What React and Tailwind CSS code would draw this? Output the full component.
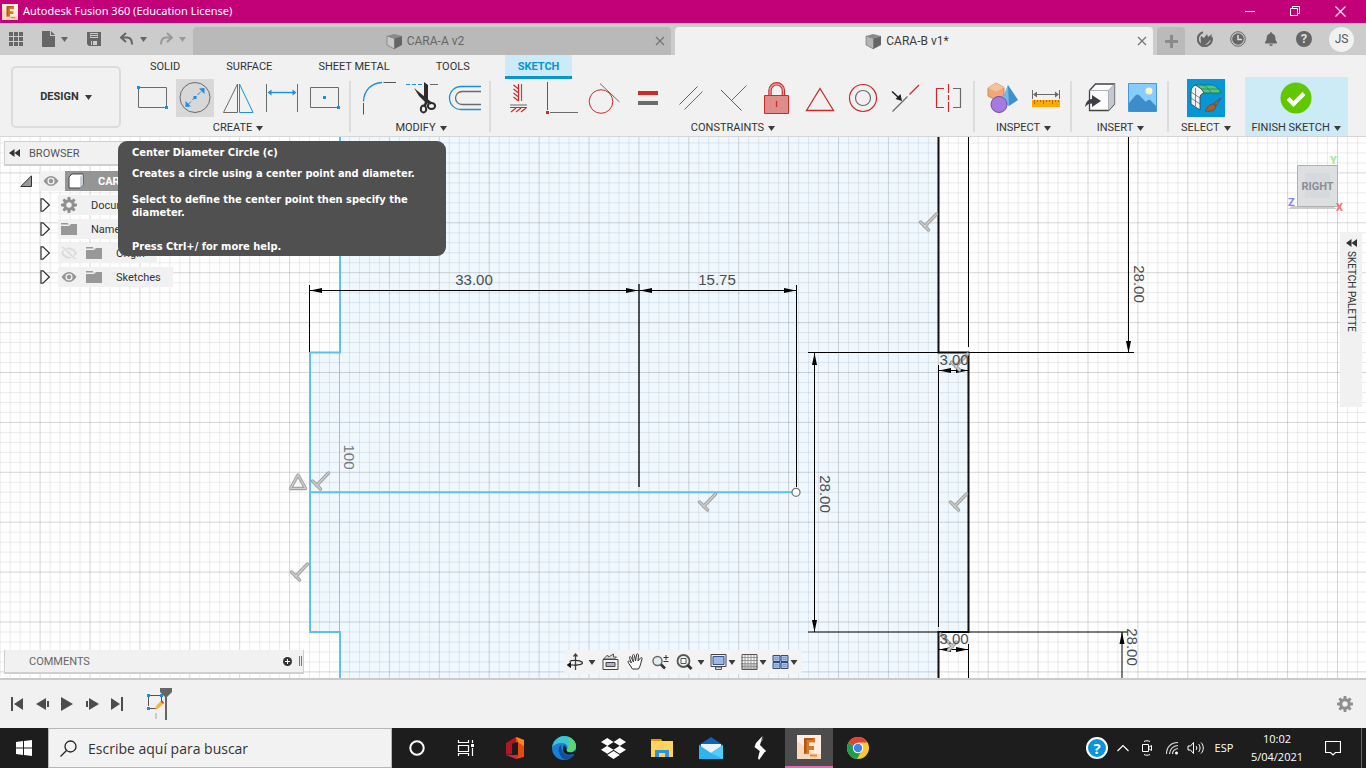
import { FaBell, FaDropbox } from "react-icons/fa";

const BLUE = "#1a8fe3";
const GRAY = "#6b6b6b";
const RED = "#cc2b2b";

// --- small shared pieces ---
const Icon = ({ w = 38, h = w, children }) => (
  <svg width={w} height={h} viewBox={`0 0 ${w} ${h}`} fill="none" className="shrink-0" aria-hidden="true">
    {children}
  </svg>
);

const Caret = ({ color = "#3c3c3c" }) => (
  <Icon w={7} h={5}>
    <path d="M0 0h7L3.5 5z" fill={color} />
  </Icon>
);

const Gear = ({ size = 16, color = "#8f8f8f" }) => (
  <svg width={size} height={size} viewBox="-8 -8 16 16" className="shrink-0" aria-hidden="true">
    <circle r="4.2" fill="none" stroke={color} strokeWidth="3" />
    {[0, 45, 90, 135, 180, 225, 270, 315].map((a) => (
      <path key={a} d="M-1.7 -5L-1.3 -8H1.3L1.7 -5z" fill={color} transform={`rotate(${a})`} />
    ))}
  </svg>
);

const Eye = () => (
  <Icon w={16}>
    <path d="M.5 8C3 4.400 5.500 3 8 3s5 1.400 7.500 5c-2.500 3.600-5 5-7.500 5S3 11.600.5 8z" fill="#959595" />
    <circle cx="8" cy="8" r="3.6" fill="#f1f1f1" />
    <circle cx="8" cy="8" r="2.2" fill="#959595" />
  </Icon>
);

const EyeOff = () => (
  <Icon w={16}>
    <path d="M1 8c2.300-3.300 4.600-4.600 7-4.600s4.700 1.300 7 4.600c-2.300 3.300-4.600 4.600-7 4.600S3.300 11.300 1 8z" stroke="#dadada" strokeWidth="1.8" />
    <circle cx="8" cy="8" r="2.2" fill="#dadada" />
    <path d="M1.500 2.500l13 11.500" stroke="#f1f1f1" strokeWidth="3.5" />
    <path d="M1.500 2l13 12" stroke="#dadada" strokeWidth="1.6" />
  </Icon>
);

const Folder = () => (
  <Icon w={16} h={14}>
    <path d="M0 1h6.500l1.500 1.500H0zM0 4h8l2-2h6v11H0z" fill="#989898" />
  </Icon>
);

const Cube = ({ front = "#c4c4c4" }) => (
  <Icon w={17}>
    <path d="M1 3l7-2 8 2-7.500 2.500z" fill="#8a8a8a" />
    <path d="M1 3l7.500 2.500V16L1 12z" fill={front} stroke="#777" strokeWidth=".7" />
    <path d="M16 3L8.500 5.500V16l7.500-4z" fill="#656565" />
  </Icon>
);

const Collapse = () => (
  <Icon w={11} h={8}>
    <path d="M5.500 0v8L0 4zM11 0v8L5.500 4z" fill="#333" />
  </Icon>
);

const FusionLogo = ({ size }) => (
  <svg width={size} height={size} viewBox="0 0 24 24" className="shrink-0" aria-hidden="true">
    <path d="M0 0h24v24H0z" fill="#fdeee0" />
    <path d="M0 7c8 2 10 12 24 12v5H0z" fill="#fad9ba" />
    <path d="M7 3h11v4.500h-6V11h5v4h-5v4H7z" fill="#d9772a" />
    <path d="M7 3h11l-3 2H9.500v12L7 19z" fill="#b05a17" />
    <path d="M13 20.500h7" stroke="#e58a3c" strokeWidth="2" />
  </svg>
);

// --- ribbon tools, grouped as in the toolbar ---
const createTools = [
  {
    name: "2-Point Rectangle",
    art: (
      <>
        <path d="M5.500 8.500h28v20h-28z" stroke={GRAY} />
        <path d="M4 7h3v3H4zM32 27h3v3h-3z" fill={BLUE} />
      </>
    ),
  },
  {
    name: "Center Diameter Circle",
    active: true,
    art: (
      <>
        <circle cx="19" cy="18.500" r="15" stroke={GRAY} />
        <path d="M11.500 26L26.500 11" stroke={BLUE} strokeDasharray="5 2" />
        <path d="M9.500 28v-6l5.500 5.500zM28.500 9v6L23 9.500zM17.500 17h3v3h-3z" fill={BLUE} />
      </>
    ),
  },
  {
    name: "Mirror",
    art: (
      <>
        <path d="M4.500 33.500L18.500 5v28.500z" stroke={GRAY} />
        <path d="M20.500 5v28.500H34z" stroke={BLUE} />
      </>
    ),
  },
  {
    name: "Sketch Dimension",
    art: (
      <>
        <path d="M4.500 5v28M35.500 5v28" stroke={GRAY} />
        <path d="M8 13.500h24" stroke={BLUE} strokeWidth="1.4" />
        <path d="M5.500 13.500l4-3v6zM34.500 13.500l-4-3v6z" fill={BLUE} />
      </>
    ),
  },
  {
    name: "Center Rectangle",
    art: (
      <>
        <path d="M5.500 8.500h28v20h-28z" stroke={GRAY} />
        <path d="M18 17h3v3h-3zM32 27h3v3h-3z" fill={BLUE} />
      </>
    ),
  },
];

const modifyTools = [
  {
    name: "Fillet",
    art: (
      <>
        <path d="M4.500 22.500C5 11.500 12 4 23 3.500" stroke={BLUE} strokeWidth="1.3" />
        <path d="M24.500 3.500H37M4.500 24v11.500" stroke="#555" />
      </>
    ),
  },
  {
    name: "Trim",
    art: (
      <>
        <path d="M4 5.500h17" stroke={BLUE} strokeDasharray="4 2" />
        <path d="M28 5.500h8" stroke={GRAY} />
        <path d="M22 3l4 3v17l-4-4zM12 9l16 13-3 3-8-8z" fill="#2d2d2d" />
        <path d="M22.500 28l2-6 4.500 2" stroke="#2d2d2d" strokeWidth="2.5" />
        <ellipse cx="21.500" cy="30" rx="2.700" ry="3.500" stroke="#2d2d2d" strokeWidth="2" />
        <ellipse cx="29.500" cy="27" rx="3.600" ry="3" stroke="#2d2d2d" strokeWidth="2" />
      </>
    ),
  },
  {
    name: "Offset",
    art: (
      <>
        <path d="M36 7.500H16a11.500 11.500 0 000 23h20" stroke={BLUE} strokeWidth="1.3" />
        <path d="M36 12.500H17a6.500 6.500 0 000 13h19" stroke={GRAY} strokeWidth="1.3" />
      </>
    ),
  },
];

const constraintTools = [
  {
    name: "Horizontal/Vertical",
    art: (
      <>
        <path d="M19.500 5v17M11 28.500h17M14.500 6l5 4M14.500 10l5 4M14.500 14l5 4M14.500 18l5 4M12 33l5-4M17 33l5-4M22 33l5-4" stroke={RED} strokeWidth="1.2" />
        <path d="M22.500 5v17M11 26h17" stroke={GRAY} strokeWidth="1.2" />
      </>
    ),
  },
  {
    name: "Coincident",
    art: (
      <>
        <path d="M5.500 3v28" stroke={RED} />
        <path d="M4 32h3v3H4z" fill={RED} />
        <path d="M8 33.500h28" stroke={GRAY} />
      </>
    ),
  },
  {
    name: "Tangent",
    art: (
      <>
        <circle cx="16" cy="22.500" r="11.800" stroke={RED} />
        <path d="M15 4.500L34.500 23" stroke={GRAY} />
      </>
    ),
  },
  {
    name: "Equal",
    art: (
      <>
        <path d="M10 12h20v4H10z" fill={RED} />
        <path d="M10 22h20v4H10z" fill={GRAY} />
      </>
    ),
  },
  {
    name: "Parallel",
    art: (
      <>
        <path d="M8.500 25.500l18-18" stroke={RED} />
        <path d="M13.500 30.500l18-18" stroke={GRAY} />
      </>
    ),
  },
  {
    name: "Perpendicular",
    art: (
      <>
        <path d="M7 11l20.500 20.500" stroke={RED} />
        <path d="M18 21L32.500 6.500" stroke={GRAY} />
      </>
    ),
  },
  {
    name: "Fix/Unfix",
    art: (
      <>
        <path d="M13 17v-5.500a6.700 6.700 0 0113.400 0V17" stroke={RED} strokeWidth="3.4" />
        <path d="M13 17v-5.500a6.700 6.700 0 0113.400 0V17" stroke="#e9a9a9" strokeWidth="1.2" />
        <path d="M7.500 16.500h24v18h-24z" fill="#e08c8c" stroke={RED} />
        <path d="M19.500 22v6" stroke={RED} strokeWidth="1.3" />
      </>
    ),
  },
  {
    name: "Midpoint",
    art: <path d="M20 9.500l13.500 22H6.500z" stroke={RED} strokeWidth="1.3" />,
  },
  {
    name: "Concentric",
    art: (
      <>
        <circle cx="20" cy="19" r="13.500" stroke={RED} strokeWidth="1.2" />
        <circle cx="20" cy="19" r="7.500" stroke={GRAY} strokeWidth="1.2" />
      </>
    ),
  },
  {
    name: "Collinear",
    art: (
      <>
        <path d="M6.500 32.500l15-15" stroke={GRAY} strokeWidth="1.2" />
        <path d="M23.500 15.500L33 6" stroke={RED} strokeWidth="1.2" />
        <path d="M6 12.500l6 5.500" stroke="#222" strokeWidth="1.6" />
        <path d="M16 22l-6.500-2 5-5z" fill="#222" />
      </>
    ),
  },
  {
    name: "Symmetry",
    art: (
      <>
        <path d="M15 9.500H7.500v19H15M19.500 5v9M19.500 16v5M19.500 23v10" stroke={RED} strokeWidth="1.2" />
        <path d="M24 9.500h7.500v19H24" stroke={GRAY} strokeWidth="1.2" />
      </>
    ),
  },
];

const inspectTools = [
  {
    name: "Section Analysis",
    art: (
      <>
        <path d="M13 4l8 4.500v8L13 21l-8-4v-8z" fill="#f0a878" stroke="#c47a45" strokeWidth=".8" />
        <path d="M13 4l8 4.500-8 4-8-3.500z" fill="#f7c39c" />
        <path d="M25 6l10 15-9 6-7-5z" fill="#3f8fcd" />
        <path d="M25 6l1 21-7-5z" fill="#74b8e6" />
        <circle cx="16" cy="25.500" r="8" fill="#a57be0" stroke="#7448b4" />
      </>
    ),
  },
  {
    name: "Measure",
    art: (
      <>
        <path d="M6.500 11v9M33.500 11v9M10 15.500h20" stroke={GRAY} />
        <path d="M7 15.500l4-3v6zM33 15.500l-4-3v6z" fill={GRAY} />
        <path d="M6 21h28v7H6z" fill="#ffa800" />
        <path d="M8.500 21v4M11.500 21v2M14.500 21v2M17.500 21v4M20.500 21v2M23.500 21v2M26.500 21v4M29.500 21v2M32.500 21v2" stroke="#b06c00" />
      </>
    ),
  },
];

const insertTools = [
  {
    name: "Insert Derive",
    art: (
      <>
        <path d="M9.500 11.500l6-6.500h19v20l-6 6.500h-19z" fill="#fbfbfb" stroke="#444" strokeWidth="1.3" />
        <path d="M28.500 11.500l6-6.500v20l-6 6.500z" fill="#c3c8d1" />
        <path d="M9.500 11.500h19v20M28.500 11.500L34.500 5" stroke="#9b9fa8" strokeWidth=".8" />
        <path d="M5 28c1-6 4-8 7-8v-4l9 6-9 6v-3.500c-3 0-5 1-7 3.500z" fill="#3e3e46" />
      </>
    ),
  },
  {
    name: "Canvas",
    art: (
      <>
        <path d="M5.500 4.500h28v28h-28z" fill="#86cdff" stroke="#4997d3" />
        <path d="M6 24l6-7c2-2 3-2 5 0l6 6c2-3 4-3 6 0l4 4v5.500H6z" fill="#3b8dcc" />
        <circle cx="26" cy="12" r="3.500" fill="#fff7c4" />
      </>
    ),
  },
];

const selectTools = [
  {
    name: "Select",
    art: (
      <>
        <path d="M0 0h38v38H0z" fill="#0696d7" />
        <path d="M8 6h18c4 2 6 4 8 8H17c-2-4-5-6-9-8z" fill="#4fc586" stroke="#1b7046" strokeWidth=".8" />
        <path d="M16 6c4 2 7 5 8 8M13 10h18" stroke="#257d51" strokeWidth=".7" />
        <path d="M8 6c-3 2-4 4-4 7v12l9 6V19c0-3 1-4 4-5-2-4-5-6-9-8z" fill="#f2f4f5" stroke="#444" strokeWidth=".9" />
        <path d="M8.500 9v18M4 13l9 6M4 19l9 6" stroke="#555" strokeWidth=".7" />
        <path d="M34 19l-7 5 2 3z" fill="#8b6a4c" stroke="#58483c" strokeWidth=".7" />
        <path d="M27 25c-5 0-6 3-9 7 5 1 10 0 11-4z" fill="#a2622c" stroke="#6e3f17" strokeWidth=".7" />
      </>
    ),
  },
];

const ToolGroup = ({ label, tools }) => (
  <div className="flex">
    <div className="flex flex-col items-center pr-1.5 pl-2">
      <div className="flex gap-[5px]">
        {tools.map((tool) => (
          <button key={tool.name} type="button" aria-label={tool.name} className={tool.active ? "bg-[#d8d8d8]" : ""}>
            <Icon>{tool.art}</Icon>
          </button>
        ))}
      </div>
      <button type="button" className="mt-[3px] flex h-4 items-center gap-1 whitespace-nowrap">
        {label} <Caret />
      </button>
    </div>
  </div>
);

const Divider = () => <span className="mt-0.5 h-[51px] w-0.5 bg-[#dcdcdc]" />;

const TitleBar = () => (
  <header className="flex h-[23px] shrink-0 items-center bg-[#c20077] pr-[3px] pl-0.5 text-white">
    <FusionLogo size={16} />
    <h1 className="ml-[5px] flex-1 font-['Noto_Sans',sans-serif] text-[11px]">Autodesk Fusion 360 (Education License)</h1>
    <button type="button" aria-label="Minimize" className="flex w-[45px] justify-center">
      <Icon w={11}><path d="M0 5.500h10" stroke="#fff" /></Icon>
    </button>
    <button type="button" aria-label="Restore" className="flex w-[45px] justify-center">
      <Icon w={11}><path d="M.5 2.500h7v7h-7zM2.500 2.500v-2h7v7h-2" stroke="#fff" /></Icon>
    </button>
    <button type="button" aria-label="Close" className="flex w-[45px] justify-center">
      <Icon w={11}><path d="M.5.5l10 10M10.500.5l-10 10" stroke="#fff" strokeWidth="1.1" /></Icon>
    </button>
  </header>
);

const DocTab = ({ name, active = false }) => (
  <div className={`flex min-w-0 flex-1 items-center rounded-t px-1.5 ${active ? "bg-[#f1f1f1] text-[#3c3c3c]" : "bg-[#b9b9b9] text-[#666]"}`}>
    <button type="button" className="flex flex-1 items-center justify-center gap-1 pr-1 text-[12px]">
      <Cube front={active ? "#b4b4b4" : "#c8c8c8"} />
      {name}
    </button>
    <button type="button" aria-label={`Close ${name}`}>
      <Icon w={10}><path d="M1 1l8 8M9 1L1 9" stroke="#777" strokeWidth="1.3" /></Icon>
    </button>
  </div>
);

const TabBar = () => (
  <div className="flex h-8 shrink-0 bg-[#cccccc] pt-1">
    <div className="flex w-[193px] shrink-0 items-center pb-1 pl-[9px]">
      <button type="button" aria-label="Data panel">
        <Icon w={14}>
          <path d="M0 0h4v4H0zM5 0h4v4H5zM10 0h4v4h-4zM0 5h4v4H0zM5 5h4v4H5zM10 5h4v4h-4zM0 10h4v4H0zM5 10h4v4H5zM10 10h4v4h-4z" fill="#666" />
        </Icon>
      </button>
      <button type="button" aria-label="File" className="ml-[19px] flex items-center gap-1.5">
        <Icon w={13} h={16}><path d="M0 0h8v5h5v11H0zM9 0l4 4H9z" fill="#666" /></Icon>
        <Caret color="#666" />
      </button>
      <button type="button" aria-label="Save" className="ml-[19px]">
        <Icon w={14}>
          <path d="M0 0h14v14H2l-2-2z" fill="#666" />
          <path d="M3 1h8v5H3zM4 9h6v4H4z" fill="#ccc" />
          <path d="M3.500 2.500h7M3.500 4.500h7M5.500 9v4" stroke="#666" />
        </Icon>
      </button>
      <button type="button" aria-label="Undo" className="ml-[19px] flex items-center gap-1.5">
        <Icon w={14}><path d="M6 1L1 5.500 6 10M1.500 5.500H7c4 0 5 3 5 7" stroke="#666" strokeWidth="2" /></Icon>
        <Caret color="#666" />
      </button>
      <button type="button" aria-label="Redo" className="ml-3 flex items-center gap-1.5">
        <Icon w={14}><path d="M8 1l5 4.500L8 10M12.500 5.500H7c-4 0-5 3-5 7" stroke="#999" strokeWidth="2" /></Icon>
        <Caret color="#999" />
      </button>
    </div>
    <div className="flex min-w-0 flex-1 gap-1">
      <DocTab name="CARA-A v2" />
      <DocTab name="CARA-B v1*" active />
    </div>
    <button type="button" aria-label="New tab" className="ml-1 flex w-7 items-center justify-center rounded-t bg-[#bababa]">
      <Icon w={13}><path d="M6.500 0v13M0 6.500h13" stroke="#8a8a8a" strokeWidth="3" /></Icon>
    </button>
    <div className="flex w-[181px] shrink-0 items-center gap-[17px] pb-1 pl-3">
      <button type="button" aria-label="Extensions">
        <Icon w={16}>
          <path d="M6 1.300A7 7 0 1014.500 6" stroke="#666" strokeWidth="2.2" />
          <path d="M3.500 13c1-4-.5-5 .5-8l3 2 3-4 1 3 4-3-1 4 1.500 1-3.500 2c-1 3-3 2-4 4.500z" fill="#666" />
        </Icon>
      </button>
      <button type="button" aria-label="Job status">
        <Icon w={16}>
          <circle cx="8" cy="8" r="7.300" stroke="#666" />
          <circle cx="8" cy="8" r="5.800" fill="#666" />
          <path d="M8 4v4.500h4" stroke="#ddd" strokeWidth="1.5" />
        </Icon>
      </button>
      <button type="button" aria-label="Notifications" className="px-px">
        <FaBell size={14} color="#666" />
      </button>
      <button type="button" aria-label="Help" className="flex size-4 items-center justify-center rounded-full bg-[#666] text-[13px] font-bold text-[#ddd]">
        ?
      </button>
      <button type="button" aria-label="Profile" className="size-[25px] rounded-full bg-[#f1f1f1] text-[12px] text-[#555]">
        JS
      </button>
    </div>
  </div>
);

const Ribbon = () => (
  <div className="flex h-[82px] shrink-0 border-b border-[#d6d6d6] bg-[#f1f1f1] text-[11px] text-[#333]">
    <button type="button" className="mt-[11px] ml-[11px] flex h-[62px] w-[110px] shrink-0 items-center justify-center gap-1.5 rounded-[5px] border-2 border-[#dcdcdc] font-bold">
      DESIGN <Caret />
    </button>
    <div className="ml-1 flex flex-1 flex-col">
      <nav className="flex h-6 items-stretch pl-0.5">
        <button type="button" className="px-[23px]">SOLID</button>
        <button type="button" className="px-[23px]">SURFACE</button>
        <button type="button" className="px-[23px]">SHEET METAL</button>
        <button type="button" className="px-[23px]">TOOLS</button>
        <button type="button" className="ml-3 border-b-[3px] border-[#0696d7] bg-[#cdeaf7] px-[13px] pt-[3px] font-bold text-[#0696d7]">
          SKETCH
        </button>
      </nav>
      <div className="flex h-[57px] items-start">
        <ToolGroup label="CREATE" tools={createTools} />
        <Divider />
        <ToolGroup label="MODIFY" tools={modifyTools} />
        <Divider />
        <ToolGroup label="CONSTRAINTS" tools={constraintTools} />
        <Divider />
        <ToolGroup label="INSPECT" tools={inspectTools} />
        <Divider />
        <ToolGroup label="INSERT" tools={insertTools} />
        <Divider />
        <div className="pl-1">
          <ToolGroup label="SELECT" tools={selectTools} />
        </div>
        <button type="button" className="-mt-0.5 ml-2 flex h-[59px] flex-col items-center bg-[#cdeaf7] px-[7px] pt-0.5">
          <Icon>
            <circle cx="19" cy="19" r="15.500" fill="#61c800" />
            <path d="M11 19.500l5.500 5.500L27 14.500" stroke="#fff" strokeWidth="4.2" />
          </Icon>
          <span className="mt-[3px] flex h-4 items-center gap-1 whitespace-nowrap">
            FINISH SKETCH <Caret />
          </span>
        </button>
      </div>
    </div>
  </div>
);

// --- sketch drawing ---
const STEP = 9.98;
const gridLines = (origin, from, to) => {
  const lines = [];
  for (let i = Math.ceil((from - origin) / STEP); origin + i * STEP < to; i++) {
    lines.push({ pos: origin + i * STEP, major: i % 5 === 0 });
  }
  return lines;
};

const Arrow = ({ x, y, angle }) => (
  <path d="M0 0L12 -2.500V2.500z" fill="#000" transform={`translate(${x} ${y}) rotate(${angle})`} />
);

const PerpMark = ({ x, y, flip = false }) => (
  <g transform={`translate(${x} ${y}) scale(${flip ? -1 : 1} 1)`} strokeLinecap="round" fill="none">
    <path d="M8.500 -8L-3.500 4.500M-7.500 0L0.500 8" stroke="#a3a3a3" strokeWidth="3.4" />
    <path d="M8.500 -8L-3.500 4.500M-7.500 0L0.500 8" stroke="#cfcfcf" strokeWidth="1.2" />
  </g>
);

const DimText = ({ x, y, vertical = false, color = "#4a4e52", children }) => (
  <text
    textAnchor="middle"
    fill={color}
    transform={`translate(${x} ${y})${vertical ? " rotate(90)" : ""}`}
    className="font-['Liberation_Sans',sans-serif] text-[15px]"
  >
    {children}
  </text>
);

const Sketch = () => (
  <svg className="absolute inset-0 h-full w-full" viewBox="0 137 1366 541" preserveAspectRatio="xMidYMid slice" fill="none">
    <path d="M339.500 130V352.500H309.500V632H339.500V690H938.500V632H968.500V352.500H938.500V130z" fill="#eff8fe" />
    {gridLines(339.5, 0, 1366).map(({ pos, major }) => (
      <path key={pos} d={`M${pos} 130V690`} stroke="#000" strokeOpacity={major ? 0.16 : 0.08} />
    ))}
    {gridLines(272.7, 130, 690).map(({ pos, major }) => (
      <path key={pos} d={`M0 ${pos}H1366`} stroke="#000" strokeOpacity={major ? 0.16 : 0.08} />
    ))}

    {/* profile edges */}
    <path d="M339.500 353V632" stroke="#7fe07f" />
    <path d="M340 130V352.500H310V632H340V690M310 492.300H792" stroke="#62bfe9" strokeWidth="2" />
    <path d="M938.500 130V352.500H968.500V632H938.500V690" stroke="#111" strokeWidth="2" />
    <path d="M639 284V487" stroke="#111" strokeWidth="1.4" />

    {/* dimension and extension lines */}
    <path
      d="M309.500 285V352M796.500 285V487M309.500 290.500H796.500M808 352.500H1134M808 632H1128M814.500 353V632M938.500 365V627M968.500 130V347M968.500 644V690M938.500 370.500H968.500M938.500 649.500H968.500M1128.500 130V352M1122 632V690"
      stroke="#000"
    />
    <Arrow x={310} y={290.5} angle={0} />
    <Arrow x={638} y={290.5} angle={180} />
    <Arrow x={640} y={290.5} angle={0} />
    <Arrow x={796} y={290.5} angle={180} />
    <Arrow x={814.5} y={353} angle={90} />
    <Arrow x={814.5} y={632} angle={-90} />
    <Arrow x={1128.5} y={353} angle={-90} />
    <Arrow x={1122} y={632} angle={90} />
    <Arrow x={939} y={370.5} angle={0} />
    <Arrow x={968} y={370.5} angle={180} />
    <Arrow x={939} y={649.5} angle={0} />
    <Arrow x={968} y={649.5} angle={180} />
    <circle cx="796" cy="492.300" r="4" fill="#fff" stroke="#777" strokeWidth="1.3" />

    <PerpMark x={928} y={222} />
    <PerpMark x={320} y={481} />
    <PerpMark x={299} y={572} />
    <PerpMark x={707} y={502} />
    <PerpMark x={958} y={502} />
    <PerpMark x={959} y={362} />
    <PerpMark x={949} y={642} flip />
    <path d="M298 475l7.500 13.500h-15z" stroke="#a3a3a3" strokeWidth="3.4" strokeLinejoin="round" />
    <path d="M298 475l7.500 13.500h-15z" stroke="#cfcfcf" strokeWidth="1.2" />

    <DimText x={474} y={285}>33.00</DimText>
    <DimText x={717} y={285}>15.75</DimText>
    <DimText x={954} y={365}>3.00</DimText>
    <DimText x={954} y={644}>3.00</DimText>
    <DimText x={820} y={494} vertical>28.00</DimText>
    <DimText x={1134} y={284} vertical>28.00</DimText>
    <DimText x={1127} y={647} vertical>28.00</DimText>
    <DimText x={344} y={457} vertical color="#777">100</DimText>
  </svg>
);

const Expander = () => (
  <Icon w={10} h={14}>
    <path d="M1 .8h2L9.300 7 3 13.200H1z" fill="#fff" stroke="#333" strokeWidth="1.2" />
  </Icon>
);

const TreeRow = ({ label, children }) => (
  <li className="flex h-5 items-center">
    <button type="button" aria-label={`Expand ${label}`} className="mr-2">
      <Expander />
    </button>
    <div className="flex h-5 items-center gap-[9px] bg-[#f1f1f1] pr-3 pl-[3px]">
      {children}
      <span className="pt-0.5 pl-[5px] whitespace-nowrap">{label}</span>
    </div>
  </li>
);

const Browser = () => (
  <section aria-label="Browser" className="text-[11px] text-[#333]">
    <div className="flex h-[25px] items-center border border-b-2 border-[#cfcfcf] bg-[#f1f1f1] pl-1 text-[#555]">
      <button type="button" aria-label="Collapse browser">
        <Collapse />
      </button>
      <h2 className="ml-[9px] pt-0.5">BROWSER</h2>
    </div>
    <ul className="mt-[5px] flex flex-col gap-1 pl-9">
      <li className="-ml-5 flex h-5 items-center">
        <button type="button" aria-label="Collapse CARA-B v1" className="mr-2">
          <Icon w={12}><path d="M11.500.8v10.700H.8z" fill="#999" stroke="#333" /></Icon>
        </button>
        <div className="flex h-5 items-center bg-[#f1f1f1] pr-1.5 pl-[3px]">
          <Eye />
        </div>
        <div className="flex h-5 items-center gap-3.5 bg-[#959595] pr-3 pl-[3px] font-bold text-white">
          <Icon w={16}>
            <path d="M1 4l3-3h11v11l-3 3H1z" fill="#fff" stroke="#444" />
            <path d="M12 4l3-3v11l-3 3z" fill="#c9cdd6" />
          </Icon>
          <span className="pt-0.5 whitespace-nowrap">CARA-B v1</span>
        </div>
      </li>
      <TreeRow label="Document Settings"><Gear /></TreeRow>
      <TreeRow label="Named Views"><Folder /></TreeRow>
      <TreeRow label="Origin"><EyeOff /><Folder /></TreeRow>
      <TreeRow label="Sketches"><Eye /><Folder /></TreeRow>
    </ul>
  </section>
);

const Comments = () => (
  <section aria-label="Comments" className="flex h-6 items-center border border-t-0 border-b-2 border-[#cfcfcf] bg-[#f1f1f1] pr-px pl-6 text-[11px] text-[#666]">
    <h2 className="flex-1 pt-0.5">COMMENTS</h2>
    <button type="button" aria-label="Add comment">
      <Icon w={9}>
        <circle cx="4.500" cy="4.500" r="4.500" fill="#333" />
        <path d="M4.500 2v5M2 4.500h5" stroke="#fff" />
      </Icon>
    </button>
    <span className="ml-[7px] flex gap-px">
      <span className="h-2.5 w-px bg-[#777]" />
      <span className="h-2.5 w-px bg-[#777]" />
    </span>
  </section>
);

const Tooltip = () => (
  <div
    role="tooltip"
    className="absolute top-1 left-[118px] h-[115px] w-[328px] rounded-[9px] bg-[#505050] pt-[5px] pl-3.5 font-['DejaVu_Sans_Condensed','DejaVu_Sans',sans-serif] text-[11px] leading-[13px] font-bold text-white"
  >
    <p>Center Diameter Circle (c)</p>
    <p className="mt-2">Creates a circle using a center point and diameter.</p>
    <p className="mt-[13px] w-[290px]">Select to define the center point then specify the diameter.</p>
    <p className="mt-[21px]">Press Ctrl+/ for more help.</p>
  </div>
);

const navTools = [
  {
    name: "Orbit",
    caret: true,
    wide: true,
    art: (
      <>
        <path d="M9 1v16M7 3.500L9 1l2 2.500" stroke="#444" strokeWidth="1.3" />
        <path d="M3 8.500C5 7 13 7 15.500 9c2 2-3 3.500-8.500 3.200" stroke="#333" strokeWidth="1.3" />
        <path d="M1 12h6M1 12l3-2.500v5z" fill="#111" stroke="#111" />
      </>
    ),
  },
  {
    name: "Look At",
    art: (
      <>
        <path d="M2 6l4-4 1 2 5-3v3h3l-2 2z" fill="#ddd" stroke="#555" />
        <path d="M1.500 6.500h15v10h-15z" fill="#f4f4f4" stroke="#444" />
        <path d="M4.500 9.500h9v4h-9z" fill="#aeb3c6" stroke="#444" />
      </>
    ),
  },
  {
    name: "Pan",
    art: (
      <path d="M6 16L2 10c-1-2 0-3 2-1l1 1-2-5c0-2 1-2 2 0l2 4-1-6c0-2 2-2 2 0l1 5 1-6c0-2 2-1 2 0l-.5 6L14 5c1-1 2 0 1.500 1L13.500 13l-1.500 3z" fill="#fff" stroke="#333" />
    ),
  },
  {
    name: "Zoom",
    art: (
      <>
        <circle cx="6" cy="8" r="4.500" fill="#e0edf2" stroke="#666" strokeWidth="1.4" />
        <path d="M9.500 11.500l4 4" stroke="#333" strokeWidth="2.6" />
        <path d="M12 4.500h5M14.500 2v5M12 8.500h5" stroke="#333" />
      </>
    ),
  },
  {
    name: "Fit",
    caret: true,
    wide: true,
    art: (
      <>
        <circle cx="8" cy="8" r="6" fill="#e9f0f2" stroke="#555" strokeWidth="1.8" />
        <path d="M5.500 5.500h5v5h-5z" stroke="#555" fill="#fff" />
        <path d="M12 12l4 4" stroke="#333" strokeWidth="2.8" />
      </>
    ),
  },
  {
    name: "Display Settings",
    caret: true,
    art: (
      <>
        <path d="M1.500 1.500h15v12h-15z" fill="#e9edf5" stroke="#444" />
        <path d="M3.500 3.500h11v8h-11z" fill="#9db8e2" stroke="#33558e" />
        <path d="M6 14h6v2.500H6z" fill="#ddd" stroke="#555" />
      </>
    ),
  },
  {
    name: "Grid and Snaps",
    caret: true,
    art: (
      <>
        <path d="M1.500 1.500h15v15h-15z" fill="#f4f4f4" />
        <path d="M1 11h16v6H1z" fill="#c3c4cd" />
        <path d="M4.500 1v16M7.500 1v16M10.500 1v16M13.500 1v16M1 4.500h16M1 7.500h16M1 10.500h16M1 13.500h16" stroke="#999" />
        <path d="M1.500 1.500h15v15h-15z" stroke="#555" />
      </>
    ),
  },
  {
    name: "Viewports",
    caret: true,
    art: (
      <>
        <path d="M1.500 2.500h7v6h-7zM9.500 2.500h7v6h-7zM1.500 9.500h7v6h-7zM9.500 9.500h7v6h-7z" fill="#a9c2e6" stroke="#2f4a7c" />
        <path d="M3.500 4.500h3v2h-3zM11.500 4.500h3v2h-3zM3.500 11.500h3v2h-3zM11.500 11.500h3v2h-3z" stroke="#7f9ecf" />
      </>
    ),
  },
];

const NavBar = () => (
  <div role="toolbar" aria-label="Navigation" className="absolute bottom-1 left-1/2 flex h-6 w-[237px] -translate-x-1/2 items-center gap-[5px] bg-[#f3f3f3] px-0.5">
    {navTools.map((tool) => (
      <button
        key={tool.name}
        type="button"
        aria-label={tool.name}
        className={`flex items-center ${tool.wide ? "gap-1" : "gap-px"} ${tool.caret ? "" : "px-px"}`}
      >
        <Icon w={18}>{tool.art}</Icon>
        {tool.caret && <Caret />}
      </button>
    ))}
  </div>
);

const ViewCube = () => (
  <svg width="64" height="72" viewBox="0 0 64 72" className="absolute top-[15px] right-4" aria-label="View cube">
    <path d="M6 54h40l5 3H2z" fill="#cccccc" />
    <path d="M11.500 13.500h40v41h-40z" fill="#dedfe0" stroke="#b0b0b0" />
    <path d="M19 21h25v25H19z" fill="#d6d9dd" />
    <g className="font-['Roboto',sans-serif] text-[11px]">
      <text x="31.500" y="38" textAnchor="middle" fill="#8b8e93" fontWeight="700">RIGHT</text>
      <text x="44" y="12" fill="#90ee90" fontWeight="700">Y</text>
      <text x="2" y="54" fill="#8585f5" fontWeight="700">Z</text>
      <text x="50" y="59" fill="#f07070" fontWeight="700">X</text>
    </g>
  </svg>
);

const SketchPalette = () => (
  <button
    type="button"
    className="absolute top-[95px] right-1 flex h-[175px] w-[22px] flex-col items-center gap-1 bg-[#f1f1f1] pt-[7px] text-[10px] text-[#333]"
  >
    <Collapse />
    <span className="[writing-mode:vertical-rl]">SKETCH PALETTE</span>
  </button>
);

const Viewport = () => (
  <main className="relative min-h-0 flex-1 overflow-hidden bg-white">
    <Sketch />
    <div className="relative ml-1 flex h-full w-[300px] flex-col justify-between pt-1 pb-1">
      <Browser />
      <Comments />
    </div>
    <Tooltip />
    <NavBar />
    <ViewCube />
    <SketchPalette />
  </main>
);

const playback = [
  { name: "Go to start", d: "M0 0h2v14H0zM12 1v12L3 7z" },
  { name: "Step back", d: "M10 1v12L0 7zM11 4h2v6h-2z" },
  { name: "Play", d: "M0 0l12 7-12 7z" },
  { name: "Step forward", d: "M0 4h2v6H0zM3 1v12l10-6z" },
  { name: "Go to end", d: "M0 1v12l9-6zM10 0h2v14h-2z" },
];

const Timeline = () => (
  <div className="flex h-[50px] shrink-0 items-center border-t-2 border-[#cacaca] bg-[#f1f1f1] pr-[13px] pl-[11px]">
    <div className="flex gap-3">
      {playback.map(({ name, d }) => (
        <button key={name} type="button" aria-label={name}>
          <Icon w={13} h={14}><path d={d} fill="#4c4c4c" /></Icon>
        </button>
      ))}
    </div>
    <button type="button" aria-label="Sketch1" className="ml-[22px]">
      <Icon w={28} h={32}>
        <path d="M2.500 9v9M4 7.500h10M15.500 9v6M4 20.500h6" stroke="#555" />
        <path d="M1 6h3v3H1zM14 6h3v3h-3zM1 19h3v3H1z" fill={BLUE} />
        <path d="M9 22l1-4 5-5 3 2-5 5z" fill="#f3b63e" />
        <path d="M14.500 13.500l2-1 1.500 2-1 1.500z" fill="#e83e3e" />
        <path d="M9 25h2v6H9z" fill="#ccc" />
        <path d="M14 0h12v4l-5 5v23h-2V9l-5-5z" fill="#666" />
      </Icon>
    </button>
    <button type="button" aria-label="Timeline settings" className="ml-auto">
      <Gear />
    </button>
  </div>
);

// --- Windows taskbar ---
const taskbarApps = [
  { name: "Cortana", art: <circle cx="12" cy="12" r="6.700" stroke="#fff" strokeWidth="2" /> },
  {
    name: "Task view",
    art: (
      <>
        <path d="M4.500 4v2.500h10V4M4.500 9.500h10v6h-10zM4.500 20v-2.500h10V20M18.500 4v3M18.500 12v8" stroke="#fff" strokeWidth="1.2" />
        <path d="M17 8h3v3h-3z" fill="#fff" />
      </>
    ),
  },
  {
    name: "Office",
    art: (
      <>
        <path d="M3 7l10-6 3 4-7 3v10l-6 1z" fill="#b3171d" />
        <path d="M13 1l8 3v17l-8 2z" fill="#e64a0e" />
        <path d="M13 1l8 3v6l-5-3z" fill="#f58a1f" />
        <path d="M3 19l10 4 3-4H8z" fill="#d42348" />
        <path d="M9 8l6-2v13l-6-1z" fill="#1c1c1c" />
      </>
    ),
  },
  {
    name: "Edge",
    art: (
      <>
        <circle cx="12" cy="12" r="12" fill="#1b7fd6" />
        <path d="M0 11C2 4 7 0 12 0c7 0 12 5 12 10 0 4-3 6-7 6-2 0-3-1-2-2 2-4-1-7-5-7-5 0-8 2-10 4z" fill="#3cc6cf" />
        <path d="M16 1c5 2 8 5 8 9 0 4-3 6-7 6-2 0-3-1-2-2 3-5 2-9 1-13z" fill="#5ad66e" />
        <path d="M9 9c-4 3-3 10 3 14.500 5 0 8-2 10-5-8 3-13-2-13-9.500z" fill="#0f4f9e" />
        <path d="M12 9c2 2 3 3 2.500 5 0 2 3 3 7 2l2-2v5l-1.500-1c-5 2-11 0-11-4.500 0-2 0-3 1-4.500z" fill="#1c1c1c" />
      </>
    ),
  },
  { name: "Dropbox", icon: <FaDropbox size={25} color="#fff" /> },
  {
    name: "File Explorer",
    art: (
      <>
        <path d="M1 3h10l2 3H1z" fill="#e09c00" />
        <path d="M1 5h22v16H1z" fill="#ffd35c" />
        <path d="M5 14h14v7h-4v-4H9v4H5z" fill="#2f93dc" />
      </>
    ),
  },
  {
    name: "Mail",
    art: (
      <>
        <path d="M0 9l12-8 12 8v6H0z" fill="#0c64b8" />
        <path d="M2 8h20v9H2z" fill="#eef2f7" />
        <path d="M0 9l12 8 12-8v14H0z" fill="#2cb6ef" />
        <path d="M24 9v14L12 17z" fill="#50cdf8" />
      </>
    ),
  },
  {
    name: "S app",
    art: <path d="M14.500 0L8 7l-1.500 4 6.500 5h5l-6-7zM14 5l2-5-3 6zM11 24l6-8.500-5-1.500-2 8zM11 12l5 4 2-1-5-5z" fill="#fff" />,
  },
  { name: "Fusion 360", icon: <FusionLogo size={24} />, active: true },
  {
    name: "Chrome",
    art: (
      <>
        <circle cx="12" cy="12" r="11" fill="#fcc934" />
        <path d="M12 12L2.500 6.500A11 11 0 0011 23l5-9z" fill="#1e9e4d" />
        <path d="M12 12L2.500 6.500A11 11 0 0121.500 6.500H12z" fill="#e0433a" />
        <circle cx="12" cy="12" r="5.200" fill="#fff" />
        <circle cx="12" cy="12" r="4.200" fill="#3f83f0" />
      </>
    ),
  },
];

const Taskbar = () => (
  <footer className="flex h-10 shrink-0 bg-[#1d1d1d] font-['Open_Sans',sans-serif] text-white">
    <button type="button" aria-label="Start" className="flex w-12 items-center justify-center">
      <Icon w={16}>
        <path d="M0 2l7-1v6.500H0zM8 1l8-1v7.500H8zM0 8.500h7V15l-7-1zM8 8.500h8V16l-8-1z" fill="#fff" />
      </Icon>
    </button>
    <label className="flex w-[344px] items-center border border-[#b5b5b5] bg-[#f2f2f2] pl-[11px]">
      <Icon w={17}>
        <circle cx="10.500" cy="6.500" r="5.500" stroke="#222" strokeWidth="1.3" />
        <path d="M6.500 10.500L.5 16.500" stroke="#222" strokeWidth="1.3" />
      </Icon>
      <input
        type="text"
        aria-label="Buscar"
        placeholder="Escribe aquí para buscar"
        className="ml-[11px] min-w-0 flex-1 bg-transparent text-[14px] text-[#333] outline-none placeholder:text-[#333]"
      />
    </label>
    <div className="flex gap-px pl-px">
      {taskbarApps.map((app) => (
        <button
          key={app.name}
          type="button"
          aria-label={app.name}
          className={`flex w-12 items-center justify-center ${app.active ? "border-b-2 border-[#e667b4] bg-[#4c4c4c]" : ""}`}
        >
          {app.icon || <Icon w={24}>{app.art}</Icon>}
        </button>
      ))}
    </div>
    <div className="ml-auto flex items-center">
      <button type="button" aria-label="Get help" className="flex size-[22px] items-center justify-center rounded-full border-2 border-white bg-[#0a94dc] text-[15px] font-bold">
        ?
      </button>
      <button type="button" aria-label="Show hidden icons" className="ml-[9px]">
        <Icon w={12} h={8}><path d="M.5 7L6 1.500 11.500 7" stroke="#fff" strokeWidth="1.2" /></Icon>
      </button>
      <button type="button" aria-label="Meet now" className="ml-3">
        <Icon w={12} h={16}>
          <path d="M1.500 4.500h6v7h-6zM7.500 7.500l3-2v5l-3-2M3 1.500c2-1 4-1 6 0M3 14.500c2 1 4 1 6 0" stroke="#fff" />
        </Icon>
      </button>
      <button type="button" aria-label="Network" className="ml-3">
        <Icon w={14}>
          <path d="M1.500 13C1.500 6 6 1.500 13 1.500M4.500 13C5 8 8 5 13 4.500M7.500 13c0-3 2.500-5 5.500-5.500" stroke="#ddd" strokeWidth="1.2" />
          <circle cx="11.500" cy="12" r="1.500" fill="#fff" />
        </Icon>
      </button>
      <button type="button" aria-label="Volume" className="ml-2">
        <Icon w={17} h={14}>
          <path d="M1 5h2.500l3-3.500v11L3.500 9H1zM9 5c1 1 1 3 0 4M11.500 3c2 2 2 6 0 8M14 1.500c3 3 3 8 0 11" stroke="#fff" />
        </Icon>
      </button>
      <button type="button" aria-label="Input language" className="ml-2 w-6 text-[11px]">ESP</button>
      <button type="button" className="ml-[9px] w-16 text-center text-[11px] leading-[18px]">
        10:02
        <br />
        5/04/2021
      </button>
      <button type="button" aria-label="Action center" className="ml-4">
        <Icon w={16}><path d="M.5 1.500h15v11h-5L8 15l-2.500-2.500h-5z" stroke="#fff" strokeWidth="1.2" /></Icon>
      </button>
      <span className="mr-1 ml-5 h-10 w-px bg-[#666]" />
    </div>
  </footer>
);

export default function App() {
  return (
    <div className="flex h-screen flex-col overflow-hidden bg-[#f1f1f1] font-['Roboto',sans-serif]">
      <TitleBar />
      <TabBar />
      <Ribbon />
      <Viewport />
      <Timeline />
      <Taskbar />
    </div>
  );
}
